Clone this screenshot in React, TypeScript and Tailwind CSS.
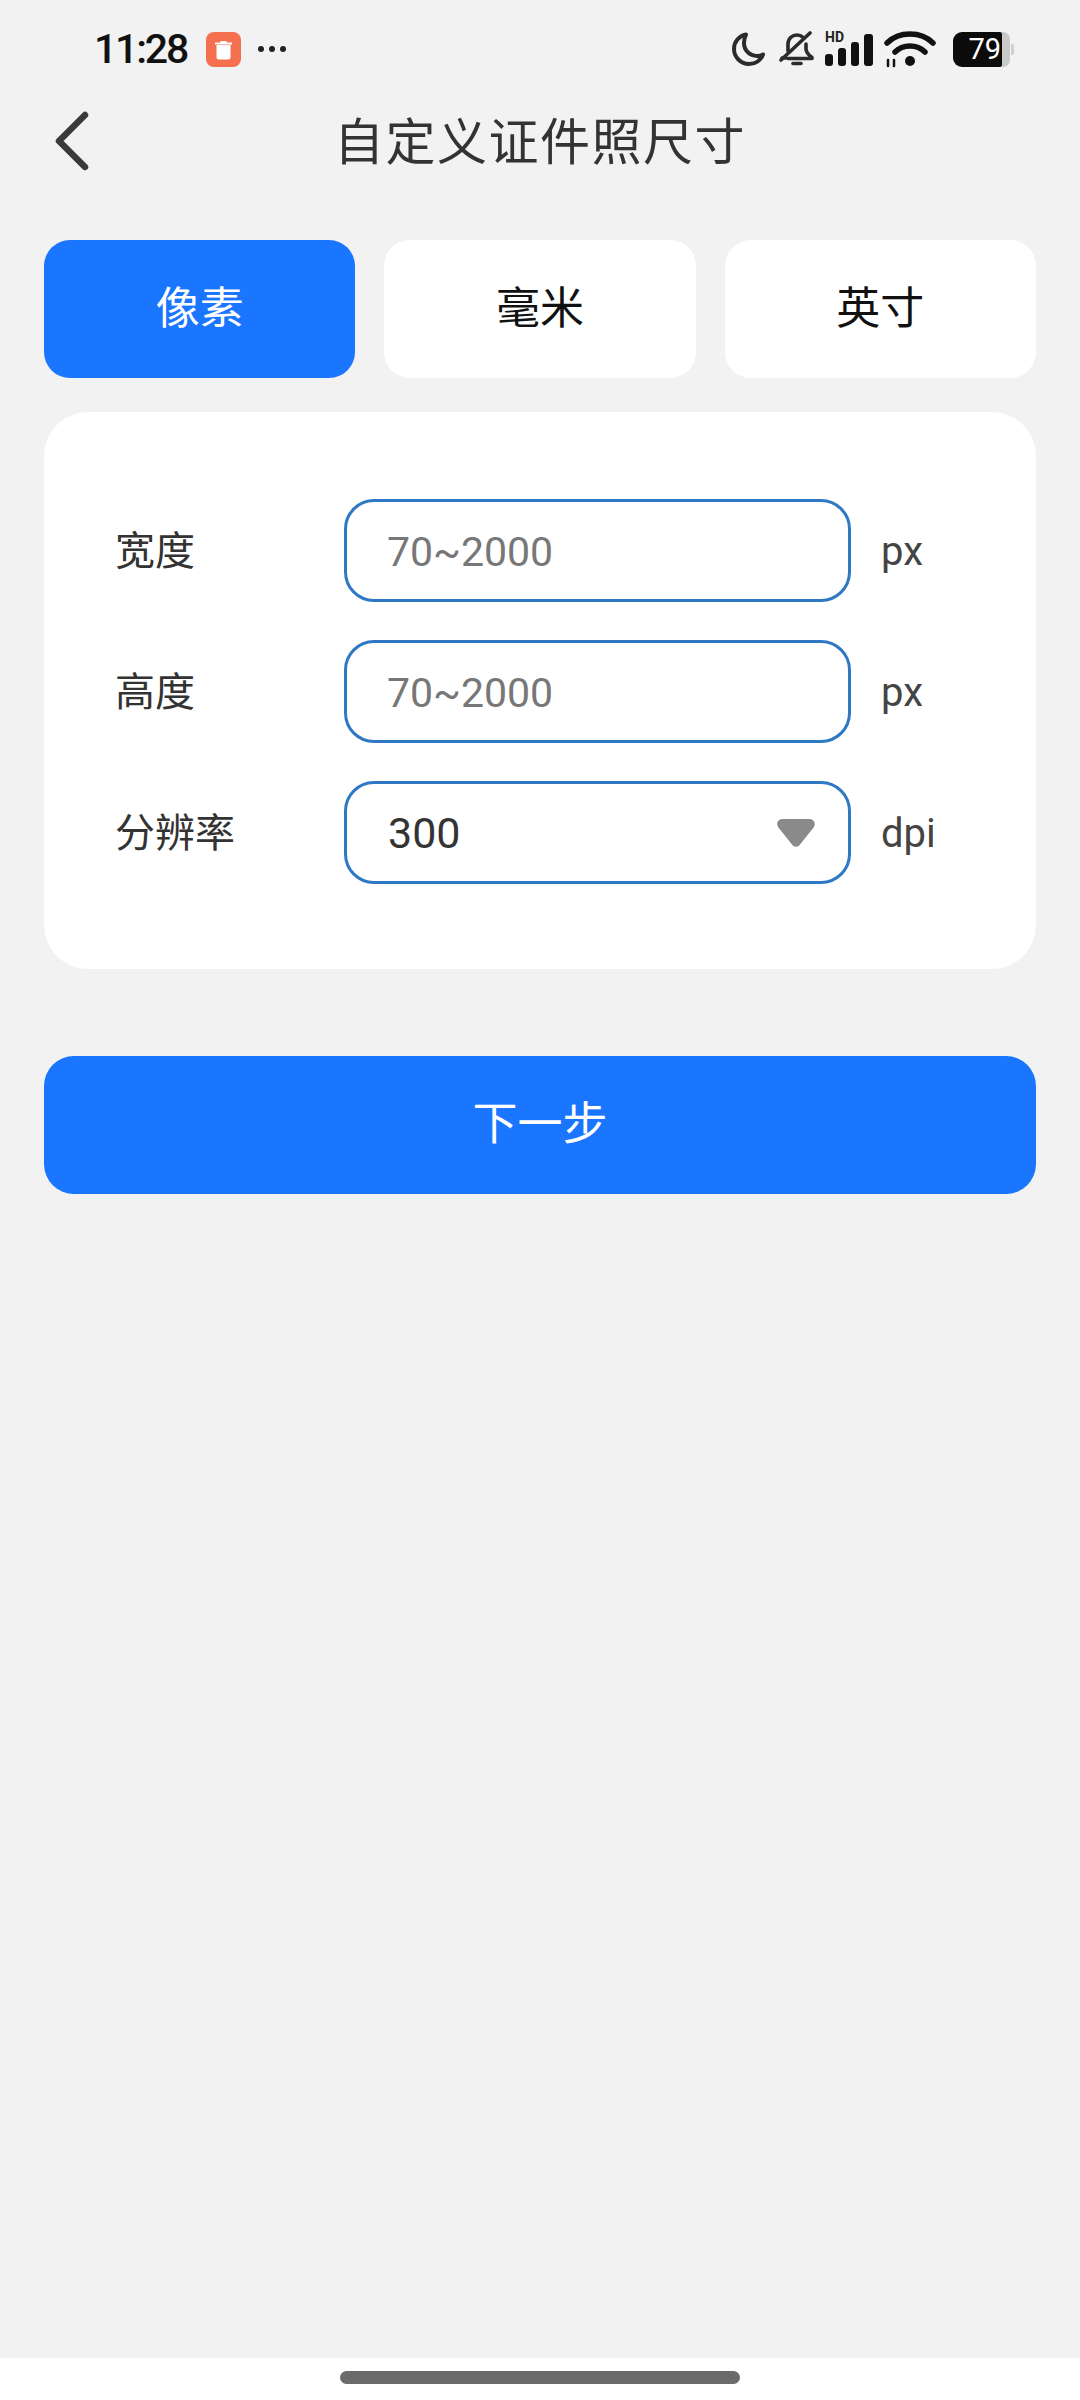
import React from 'react';

const FONT = "font-['Roboto','Noto_Sans_CJK_SC',sans-serif]";

function StatusBar() {
  return (
    <div className="flex h-[98px] items-center justify-between pl-[94px] pr-[66px]">
      <div className="flex items-center">
        <span className="text-[41px] leading-none font-medium tracking-[-2.200px] text-[#111]">11:28</span>
        <div className="ml-[19px] flex h-[35px] w-[35px] items-center justify-center rounded-[8px] bg-[#f4704f]">
          <svg width="19" height="21" viewBox="0 0 19 21" fill="#fff">
            <path d="M1 3.500h17v2H1z" />
            <path d="M6.500 2h6v2h-6z" />
            <path d="M2.500 6h14v12a2.500 2.500 0 0 1-2.500 2.500H5A2.500 2.500 0 0 1 2.500 18z" />
          </svg>
        </div>
        <div className="ml-[17px] flex items-center gap-[5px]">
          <span className="h-[6px] w-[6px] rounded-full bg-[#222]" />
          <span className="h-[6px] w-[6px] rounded-full bg-[#222]" />
          <span className="h-[6px] w-[6px] rounded-full bg-[#222]" />
        </div>
      </div>
      <div className="flex items-center">
        {/* moon */}
        <svg width="34" height="34" viewBox="0 0 34 34" fill="none" stroke="#2b2b2b" strokeWidth="4" strokeLinejoin="round">
          <path d="M14 2.500C7 4 2 9.700 2 17c0 8 6.600 15 15 15 6.600 0 12-4 14-9.500-2 1-4 1.400-6 1.400C17.500 23.900 12 18.300 12 11c0-3.200.7-6 2-8.500z" />
        </svg>
        {/* muted bell */}
        <svg className="ml-[13px]" width="36" height="36" viewBox="0 0 36 36" fill="none" stroke="#2b2b2b" strokeWidth="3.600" strokeLinecap="round" strokeLinejoin="round">
          <path d="M9 20V13C9 7.500 13 4 18 4c2.500 0 4.500.8 6 2.200" />
          <path d="M27 13v5c0 3.500 2 5.500 6 8.500v1H9" />
          <path d="M3 27h4" />
          <path d="M14 32.500h8" />
          <path d="M2 29L31 2" />
        </svg>
        {/* signal */}
        <div className="relative ml-[10px] flex h-[34px] w-[50px] items-end gap-[5px]">
          <span className="absolute left-0 top-[-2px] text-[14px] leading-none font-bold text-[#222]">HD</span>
          <span className="h-[12px] w-[8px] rounded-[3px] bg-[#111]" />
          <span className="h-[18px] w-[8px] rounded-[3px] bg-[#111]" />
          <span className="h-[24px] w-[8px] rounded-[3px] bg-[#111]" />
          <span className="h-[32px] w-[9px] rounded-[3px] bg-[#111]" />
        </div>
        {/* wifi */}
        <svg className="ml-[9px]" width="52" height="38" viewBox="0 0 52 38" fill="none" stroke="#111" strokeWidth="5.500" strokeLinecap="round">
          <path d="M3 13C15 1 37 1 49 13" />
          <path d="M11 22C19 14 33 14 41 22" />
          <circle cx="26" cy="31" r="5" fill="#111" stroke="none" />
          <path d="M4 36v-6M10 36v-6" strokeWidth="2.500" />
        </svg>
        {/* battery */}
        <div className="ml-[17px] flex items-center">
          <div className="flex h-[35px] w-[49px] items-center justify-end overflow-hidden rounded-l-[9px] rounded-r-[2px] bg-[#0b0b0b] pr-[1px]">
            <span className="text-[29px] leading-none font-normal text-white">79</span>
          </div>
          <div className="h-[35px] w-[8px] rounded-r-[7px] bg-[#c9c9c9]" />
          <div className="ml-[1px] h-[11px] w-[3px] rounded-r-[2px] bg-[#cfcfcf]" />
        </div>
      </div>
    </div>
  );
}

function Header() {
  return (
    <div className="relative flex h-[86px] items-center justify-center">
      <button className="absolute left-[54px] top-[13px]">
        <svg width="36" height="60" viewBox="0 0 36 60" fill="none" stroke="#3a3a3a" strokeWidth="6.500" strokeLinecap="round" strokeLinejoin="round">
          <path d="M31 4L5 30l26 26" />
        </svg>
      </button>
      <h1 className="pt-[3px] text-[50px] leading-none font-normal tracking-[1.500px] text-[#333]">自定义证件照尺寸</h1>
    </div>
  );
}

function FieldRow({ label, unit, placeholder }: { label: string; unit: string; placeholder: string }) {
  return (
    <div className="flex items-center">
      <label className="w-[229px] pt-[3px] text-[40px] leading-none text-[#333]">{label}</label>
      <input
        readOnly
        placeholder={placeholder}
        className="h-[103px] w-[507px] rounded-[30px] border-[3px] border-[#2f78c4] bg-white px-[40px] pt-[2px] text-[41px] outline-none placeholder:text-[#777]"
      />
      <span className="ml-[30px] pt-[3px] text-[40px] leading-none text-[#444]">{unit}</span>
    </div>
  );
}

export default function App() {
  return (
    <div className={`flex h-[2400px] w-[1080px] flex-col bg-[#f2f2f2] ${FONT}`}>
      <StatusBar />
      <Header />

      <div className="flex-1 px-[44px] pt-[56px]">
        {/* Unit tabs */}
        <div className="flex gap-[29px]">
          <button className="h-[138px] flex-1 rounded-[26px] bg-[#1a75ff] text-[44px] text-white">像素</button>
          <button className="h-[138px] flex-1 rounded-[26px] bg-white text-[44px] text-[#111]">毫米</button>
          <button className="h-[138px] flex-1 rounded-[26px] bg-white text-[44px] text-[#111]">英寸</button>
        </div>

        {/* Form */}
        <div className="mt-[34px] flex flex-col gap-[38px] rounded-[44px] bg-white pb-[85px] pl-[71px] pt-[87px]">
          <FieldRow label="宽度" unit="px" placeholder="70~2000" />
          <FieldRow label="高度" unit="px" placeholder="70~2000" />
          <div className="flex items-center">
            <label className="w-[229px] pt-[3px] text-[40px] leading-none text-[#333]">分辨率</label>
            <div className="flex h-[103px] w-[507px] items-center justify-between rounded-[30px] border-[3px] border-[#2f78c4] bg-white pl-[41px] pr-[33px]">
              <span className="pt-[2px] text-[43px] leading-none text-[#333]">300</span>
              <svg width="38" height="28" viewBox="0 0 38 28" fill="#8a8a8a">
                <path d="M6 0h26c5 0 7 4 5 8L23 25.500c-2 3-6 3-8 0L1 8C-1 4 1 0 6 0z" />
              </svg>
            </div>
            <span className="ml-[30px] pt-[3px] text-[40px] leading-none text-[#444]">dpi</span>
          </div>
        </div>

        <button className="mt-[87px] h-[138px] w-full rounded-[30px] bg-[#1a75ff] text-[45px] text-white">下一步</button>
      </div>

      {/* Home indicator */}
      <div className="flex h-[42px] items-start justify-center bg-white pt-[13px]">
        <div className="h-[13px] w-[400px] rounded-full bg-[#6b6b6b]" />
      </div>
    </div>
  );
}
